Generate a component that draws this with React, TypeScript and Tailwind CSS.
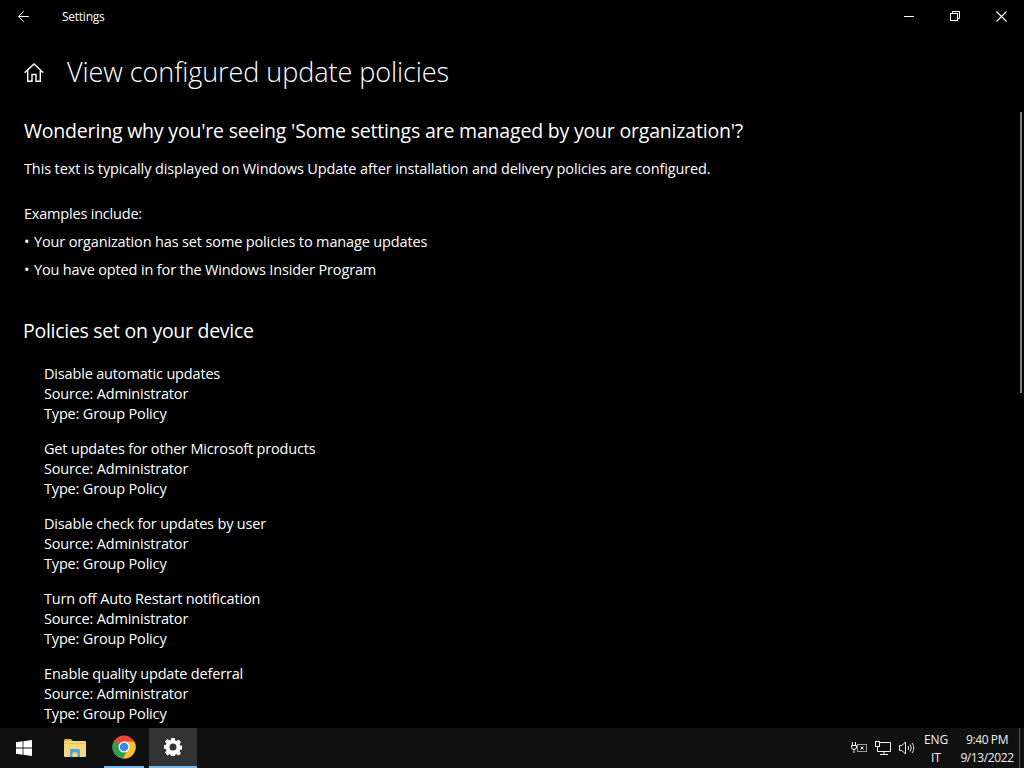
import { ArrowLeft } from "lucide-react";

const POLICIES = [
  "Disable automatic updates",
  "Get updates for other Microsoft products",
  "Disable check for updates by user",
  "Turn off Auto Restart notification",
  "Enable quality update deferral",
];

function HomeIcon() {
  return (
    <svg width="20" height="19" viewBox="0 0 20 19" fill="none" stroke="#fff" strokeWidth="1.4">
      <path d="M.7 9.800 10 1 19.300 9.800" />
      <path d="M3.700 7.500V18.300H8V11.500H12V18.300H16.300V7.500" />
    </svg>
  );
}

function MinimizeIcon() {
  return (
    <svg width="10" height="10" viewBox="0 0 10 10" fill="none" stroke="#fff" strokeWidth="1">
      <path d="M0 5.500H10" />
    </svg>
  );
}

function RestoreIcon() {
  return (
    <svg width="10" height="10" viewBox="0 0 10 10" fill="none" stroke="#fff" strokeWidth="1">
      <rect x="0.5" y="2.5" width="7" height="7" />
      <path d="M2.5 2.5V0.5H9.5V7.5H7.5" />
    </svg>
  );
}

function CloseIcon() {
  return (
    <svg width="11" height="11" viewBox="0 0 11 11" fill="none" stroke="#fff" strokeWidth="1.1">
      <path d="M.5 .5 10.500 10.500M10.500 .5 .5 10.500" />
    </svg>
  );
}

function WindowsLogo() {
  return (
    <svg width="16" height="16" viewBox="0 0 16 16" fill="#fff">
      <path d="M0 2.3 6.6 1.3V7.6H0Z" />
      <path d="M7.4 1.2 16 0V7.6H7.4Z" />
      <path d="M0 8.4H6.6V14.7L0 13.7Z" />
      <path d="M7.4 8.4H16V16L7.4 14.8Z" />
    </svg>
  );
}

function FolderIcon() {
  return (
    <svg width="22" height="18" viewBox="0 0 22 18">
      <path d="M0 1.5C0 .7.6 0 1.4 0H7l2 2.5h-9Z" fill="#e0b24e" />
      <rect x="0" y="2" width="22" height="16" rx="1" fill="#f6d77c" />
      <rect x="0" y="4" width="22" height="1" fill="#e8bd5a" />
      <path d="M6 18V11.5C6 10.7 6.7 10 7.5 10h7c.8 0 1.5.7 1.5 1.500V18h-2.500V13.500h-5V18Z" fill="#4aa8dc" />
    </svg>
  );
}

function ChromeIcon() {
  return (
    <svg width="24" height="24" viewBox="0 0 24 24">
      <circle cx="12" cy="12" r="11.500" fill="#e8483a" />
      <path d="M12 12 1.900 6.200A11.500 11.500 0 0 0 11 23.500L17.500 12Z" fill="#2f9e4f" />
      <path d="M12 6.500H22.300A11.500 11.500 0 0 1 11 23.500L17 12.500Z" fill="#fbc02d" />
      <circle cx="12" cy="12" r="5.500" fill="#fff" />
      <circle cx="12" cy="12" r="4.300" fill="#3f86e8" />
    </svg>
  );
}

function GearIcon() {
  return (
    <svg width="18" height="18" viewBox="0 0 18 18">
      <path
        fillRule="evenodd"
        fill="#fff"
        d="M7.300 0h3.400l.4 2.400 1.500.6 2-1.400 2.400 2.400-1.400 2 .6 1.500 2.400.4v3.400l-2.400.4-.6 1.500 1.400 2-2.400 2.400-2-1.400-1.500.6-.4 2.400H7.300l-.4-2.400-1.500-.6-2 1.400L1 14.600l1.400-2-.6-1.500-2.400-.4V7.300l2.400-.4.6-1.500L1 3.400 3.400 1l2 1.400 1.500-.6ZM9 5.500a3.500 3.500 0 1 0 0 7 3.500 3.500 0 0 0 0-7Z"
      />
    </svg>
  );
}

function TrayIcons() {
  return (
    <div className="flex items-center gap-2 mr-[2px]">
      {/* battery / plug */}
      <svg width="16" height="16" viewBox="0 0 16 16" fill="none" stroke="#f0f0f0" strokeWidth="1">
        <path d="M1.500 2v3M4.500 2v3M.5 5.500h5V7a2.500 2.500 0 0 1-5 0ZM3 9.500V13" />
        <rect x="6.500" y="4.500" width="9" height="7" stroke="#999" />
        <path d="M9.500 6.500l3 3M12.500 6.500l-3 3" />
      </svg>
      {/* network */}
      <svg width="16" height="16" viewBox="0 0 16 16" fill="none" stroke="#f0f0f0" strokeWidth="1">
        <rect x="0.500" y="1.500" width="4" height="5" />
        <path d="M4.500 2.500H15.500V11.500H2.500V6.500M9 11.500V14.500M5 14.500H13" />
      </svg>
      {/* volume */}
      <svg width="16" height="16" viewBox="0 0 16 16" fill="none" stroke="#f0f0f0" strokeWidth="1">
        <path d="M.5 5.500H3L6.500 2V14L3 10.500H.5Z" />
        <path d="M9 6C9.800 7.300 9.800 8.700 9 10M11 4.500C12.500 6.500 12.500 9.500 11 11.500M13 3C15.300 6 15.300 10 13 13" />
      </svg>
    </div>
  );
}

export default function App() {
  return (
    <div
      className="w-[1024px] h-[768px] overflow-hidden relative flex flex-col bg-black text-white"
      style={{ fontFamily: '"Open Sans", "Noto Sans", sans-serif' }}
    >
      {/* Title bar */}
      <div className="h-8 shrink-0 flex items-center">
        <div className="w-[46px] h-8 flex items-center justify-center">
          <ArrowLeft size={17} strokeWidth={1.4} />
        </div>
        <span className="ml-4 mt-[2px] text-xs tracking-[-0.25px]">Settings</span>
        <div className="ml-auto flex">
          <div className="w-[46px] h-8 flex items-center justify-center">
            <MinimizeIcon />
          </div>
          <div className="w-[46px] h-8 flex items-center justify-center">
            <RestoreIcon />
          </div>
          <div className="w-[46px] h-8 flex items-center justify-center">
            <CloseIcon />
          </div>
        </div>
      </div>

      {/* Page */}
      <div className="flex-1 min-h-0 overflow-hidden pl-6">
        <div className="flex items-center h-[58px] mt-[11px]">
          <HomeIcon />
          <h1 className="ml-[23px] text-[27px] font-light tracking-[-0.06px]">View configured update policies</h1>
        </div>

        <h2 className="mt-[16px] text-[19.5px] leading-[28px] tracking-[-0.19px]">
          Wondering why you're seeing 'Some settings are managed by your organization'?
        </h2>
        <p className="mt-[14px] text-[14.5px] leading-5 tracking-[-0.12px]">
          This text is typically displayed on Windows Update after installation and delivery policies are configured.
        </p>
        <p className="mt-[25px] text-[14.5px] leading-5 tracking-[-0.2px]">Examples include:</p>
        <p className="mt-2 text-[14.5px] leading-5 tracking-[-0.14px]">
          <span className="mr-px">•</span> Your organization has set some policies to manage updates
        </p>
        <p className="mt-2 text-[14.5px] leading-5 tracking-[-0.14px]">
          <span className="mr-px">•</span> You have opted in for the Windows Insider Program
        </p>

        <h2 className="mt-[37px] ml-[-1px] text-[19.5px] leading-[28px] tracking-[-0.28px]">Policies set on your device</h2>

        <div className="mt-[19px] ml-5 flex flex-col gap-[15px] text-[14.5px] leading-5 tracking-[-0.17px]">
          {POLICIES.map((name) => (
            <div key={name}>
              <div>{name}</div>
              <div>Source: Administrator</div>
              <div>Type: Group Policy</div>
            </div>
          ))}
        </div>
      </div>

      {/* Scrollbar thumb */}
      <div className="absolute left-[1020px] top-[112px] w-[2px] h-[281px] bg-[#808080]" />

      {/* Taskbar */}
      <div className="h-10 shrink-0 flex items-stretch bg-[#101010]">
        <div className="w-12 flex items-center justify-center">
          <WindowsLogo />
        </div>
        <div className="w-[50px] ml-[2px] flex items-center justify-center">
          <FolderIcon />
        </div>
        <div className="w-12 px-1 flex">
          <div className="w-10 flex items-center justify-center border-b-2 border-[#76b9ed]">
            <ChromeIcon />
          </div>
        </div>
        <div className="w-12 ml-[1px] flex items-center justify-center border-b-2 border-[#76b9ed] bg-[#333333]">
          <GearIcon />
        </div>
        <div className="ml-auto flex items-center text-xs text-[#f0f0f0]">
          <TrayIcons />
          <div className="w-[38px] mt-[2px] flex flex-col items-center leading-[18px] tracking-[-0.1px]">
            <span>ENG</span>
            <span>IT</span>
          </div>
          <div className="w-16 mt-[2px] flex flex-col items-center leading-[18px] tracking-[-0.4px]">
            <span>9:40 PM</span>
            <span>9/13/2022</span>
          </div>
          <div className="w-[5px] h-10 border-l border-[#555]" />
        </div>
      </div>
    </div>
  );
}
